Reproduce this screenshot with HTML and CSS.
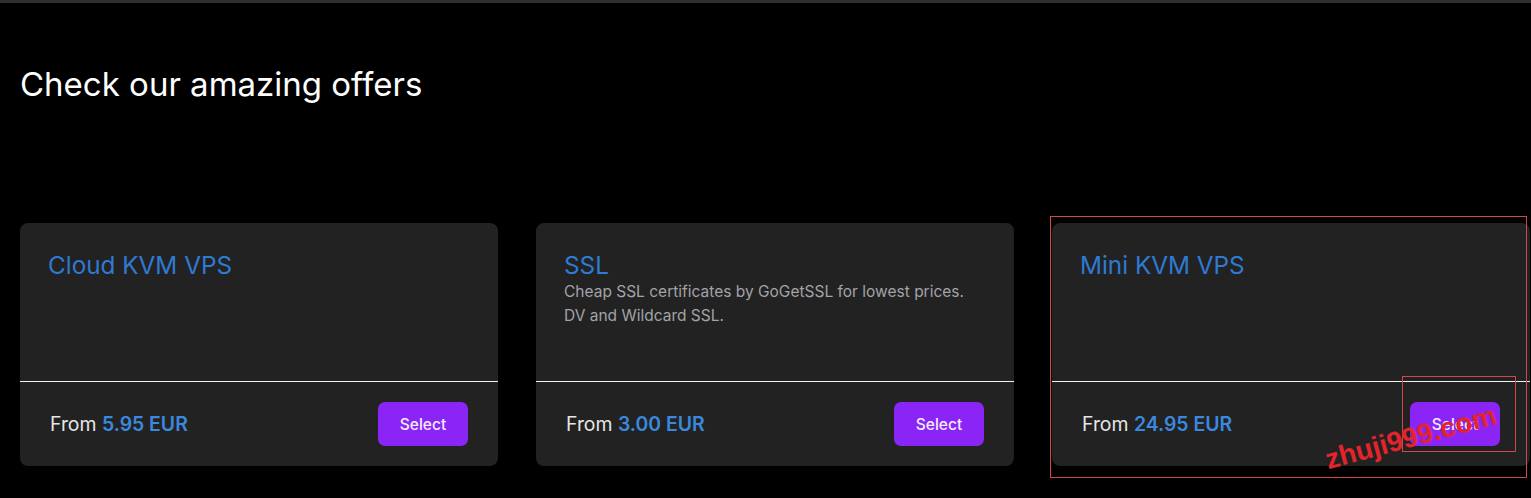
FILE: index.html
```html
<!DOCTYPE html>
<html lang="en">
<head>
<meta charset="utf-8">
<title>Check our amazing offers</title>
<link rel="stylesheet" href="styles.css">
</head>
<body>
<div class="topbar"></div>
<main class="page">
  <h1 class="heading">Check our amazing offers</h1>
  <section class="offers">
    <article class="card">
      <div class="card-body">
        <h2 class="card-title">Cloud KVM VPS</h2>
      </div>
      <div class="card-foot">
        <p class="price">From <strong>5.95 EUR</strong></p>
        <a class="btn" href="#">Select</a>
      </div>
    </article>
    <article class="card">
      <div class="card-body">
        <h2 class="card-title">SSL</h2>
        <p class="card-desc">Cheap SSL certificates by GoGetSSL for lowest prices.<br>DV and Wildcard SSL.</p>
      </div>
      <div class="card-foot">
        <p class="price">From <strong>3.00 EUR</strong></p>
        <a class="btn" href="#">Select</a>
      </div>
    </article>
    <article class="card">
      <div class="card-body">
        <h2 class="card-title">Mini KVM VPS</h2>
      </div>
      <div class="card-foot">
        <p class="price">From <strong>24.95 EUR</strong></p>
        <a class="btn" href="#">Select</a>
      </div>
    </article>
  </section>
</main>
<div class="mark mark-card"></div>
<div class="mark mark-btn"></div>
<div class="watermark">zhuji999.com</div>
</body>
</html>
```

FILE: styles.css
```css
html, body {
  margin: 0;
  padding: 0;
  background: #000;
  overflow: hidden;
}
body {
  width: 1531px;
  height: 498px;
  position: relative;
  font-family: "Inter", "Roboto", sans-serif;
  color: #fff;
}
.topbar {
  height: 3px;
  background: #2f2f2f;
}
.page {
  padding: 0 0 0 20px;
}
.heading {
  margin: 0;
  padding-top: 61px;
  height: 158px;
  box-sizing: border-box;
  font-size: 33px;
  font-weight: 400;
  line-height: 40px;
  color: #fff;
  letter-spacing: 0;
}
.offers {
  display: grid;
  grid-template-columns: repeat(3, 478px);
  column-gap: 38px;
  margin-top: 62px;
}
.card {
  background: #222;
  border-radius: 8px;
  height: 243px;
  display: flex;
  flex-direction: column;
}
.card-body {
  height: 159px;
  padding: 27px 28px 0;
  box-sizing: border-box;
  border-bottom: 1px solid #f2f2f2;
}
.card-title {
  margin: 0;
  font-size: 24.3px;
  font-weight: 400;
  line-height: 30px;
  color: #2f7ad2;
}
.card-desc {
  margin: 0;
  font-size: 15.5px;
  line-height: 24px;
  color: #a3a3a8;
}
.card-foot {
  flex: 1;
  display: flex;
  align-items: center;
  justify-content: space-between;
  padding: 0 30px;
}
.price {
  margin: 0;
  font-size: 19.4px;
  color: #e6e6e6;
}
.price strong {
  font-weight: 600;
  color: #3b88de;
}
.btn {
  display: flex;
  align-items: center;
  justify-content: center;
  width: 90px;
  height: 44px;
  border-radius: 7px;
  background: #8a25f6;
  color: #f4ecff;
  text-decoration: none;
  font-size: 15.5px;
  font-weight: 500;
}
.mark {
  position: absolute;
  border: 1px solid #d04848;
}
.mark-card {
  left: 1050px;
  top: 216px;
  width: 475px;
  height: 260px;
}
.mark-btn {
  left: 1402px;
  top: 376px;
  width: 112px;
  height: 74px;
}
.watermark {
  position: absolute;
  left: 1330px;
  top: 444px;
  font-family: "Liberation Sans", Arial, sans-serif;
  font-weight: 700;
  font-size: 28px;
  color: #e3242b;
  transform: rotate(-15deg);
  transform-origin: left bottom;
  white-space: nowrap;
}
```
